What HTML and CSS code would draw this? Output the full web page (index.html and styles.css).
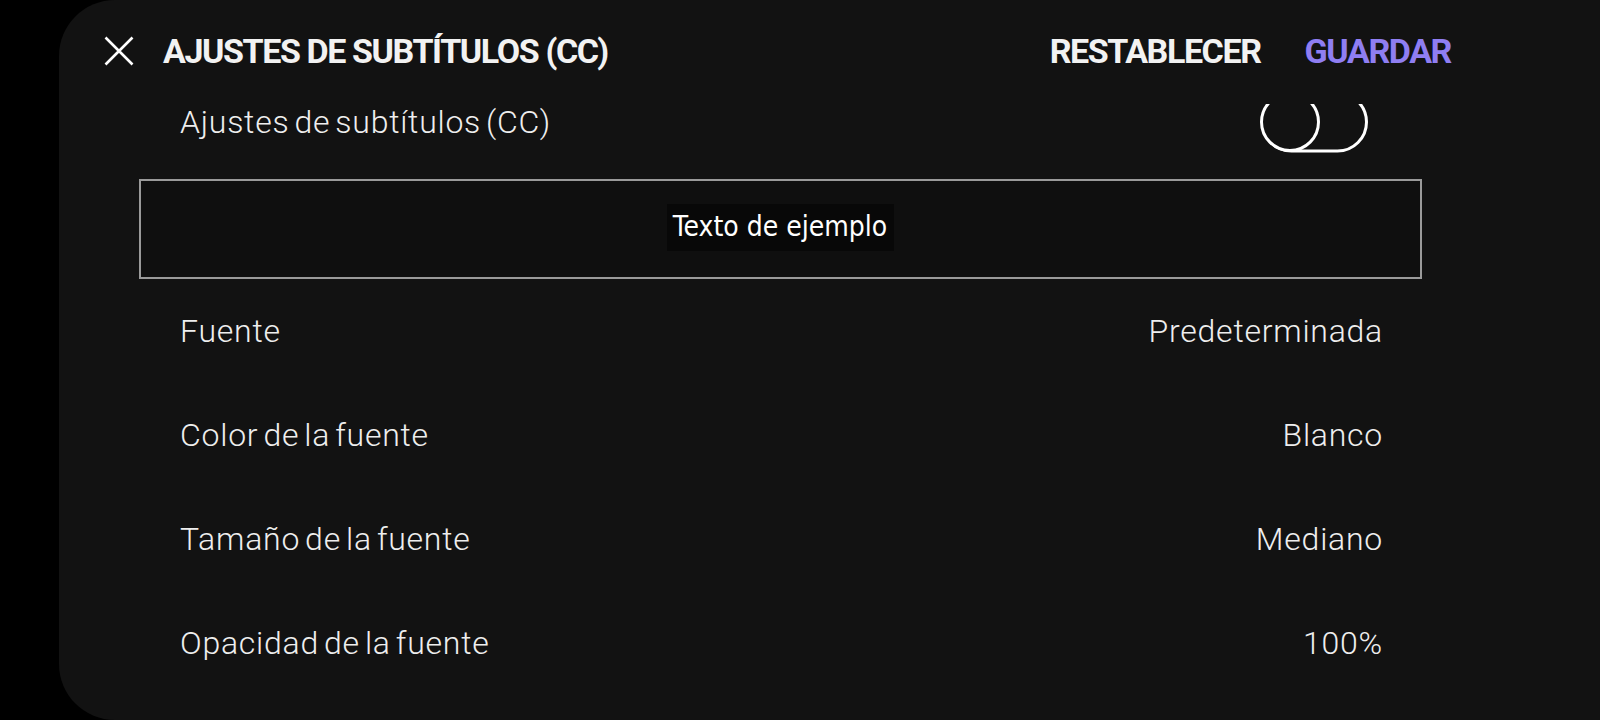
FILE: index.html
```html
<!DOCTYPE html>
<html lang="es">
<head>
    <meta charset="UTF-8">
    <title>Ajustes de subtítulos (CC)</title>
    <meta name="viewport" content="width=device-width, initial-scale=1.0">
    <link rel="stylesheet" href="styles.css">
</head>
<body>
    <div class="panel">
        <div class="header">
            <button class="close" aria-label="Cerrar">
                <svg width="30" height="30" viewBox="0 0 30 30">
                    <path d="M1.5 1.5 L28.5 28.5 M28.5 1.5 L1.5 28.5" stroke="#fff" stroke-width="2.6" fill="none"/>
                </svg>
            </button>
            <h1>AJUSTES DE SUBTÍTULOS (CC)</h1>
            <div class="actions">
                <button class="action">RESTABLECER</button>
                <button class="action save">GUARDAR</button>
            </div>
        </div>

        <div class="scroll">
            <div class="list">
                <div class="row">
                    <span class="label">Ajustes de subtítulos (CC)</span>
                    <svg class="toggle" width="110" height="62" viewBox="0 0 110 62">
                        <rect x="3.5" y="2" width="104" height="58" rx="29" fill="none" stroke="#fff" stroke-width="3"/>
                        <circle cx="31" cy="31" r="28.5" fill="#121212" stroke="#fff" stroke-width="3"/>
                    </svg>
                </div>

                <div class="preview">
                    <span class="sample">Texto de ejemplo</span>
                </div>

                <div class="row">
                    <span class="label">Fuente</span>
                    <span class="value">Predeterminada</span>
                </div>
                <div class="row">
                    <span class="label">Color de la fuente</span>
                    <span class="value">Blanco</span>
                </div>
                <div class="row">
                    <span class="label">Tamaño de la fuente</span>
                    <span class="value">Mediano</span>
                </div>
                <div class="row">
                    <span class="label">Opacidad de la fuente</span>
                    <span class="value">100%</span>
                </div>
            </div>
        </div>
    </div>
</body>
</html>
```

FILE: styles.css
```css
html, body {
    margin: 0;
    height: 720px;
    overflow: hidden;
}
body {
    background-color: #000;
    font-family: Roboto, "Liberation Sans", sans-serif;
    color: #eee;
}
.panel {
    margin-left: 59px;
    height: 720px;
    background-color: #121212;
    border-radius: 56px 0 0 56px;
    overflow: hidden;
}
.header {
    height: 101px;
    padding: 0 149px 3px 45px;
    display: flex;
    align-items: center;
}
button {
    background: none;
    border: none;
    padding: 0;
    cursor: pointer;
    font-family: inherit;
}
.close {
    width: 30px;
    height: 30px;
    display: flex;
}
.header h1 {
    margin: 0 0 0 29px;
    font-size: 34px;
    font-weight: 700;
    letter-spacing: -1.4px;
    color: #f2f2f2;
}
.actions {
    margin-left: auto;
    display: flex;
    gap: 44px;
}
.action {
    font-size: 34px;
    font-weight: 700;
    letter-spacing: -1.4px;
    color: #f2f2f2;
}
.action.save {
    color: #8f7ef2;
}
.scroll {
    height: 616px;
    overflow: hidden;
}
.list {
    margin-top: -34px;
}
.row {
    height: 104px;
    padding: 0 217px 0 121px;
    display: flex;
    align-items: center;
    justify-content: space-between;
    font-size: 32px;
    font-weight: 300;
    letter-spacing: 0.75px;
    word-spacing: -3.5px;
}
.toggle {
    margin-right: 14px;
}
.preview {
    margin: 5px 178px 0 80px;
    height: 96px;
    border: 2px solid #9a9a9a;
    background-color: #0f0f0f;
    display: flex;
    align-items: center;
    justify-content: center;
}
.sample {
    margin-top: -4px;
    padding: 6px 7px 8px 6px;
    background-color: #080808;
    color: #fff;
    font-family: "DejaVu Sans Condensed", "DejaVu Sans", sans-serif;
    font-stretch: condensed;
    font-size: 28px;
    letter-spacing: 0;
    word-spacing: 0;
}
```
